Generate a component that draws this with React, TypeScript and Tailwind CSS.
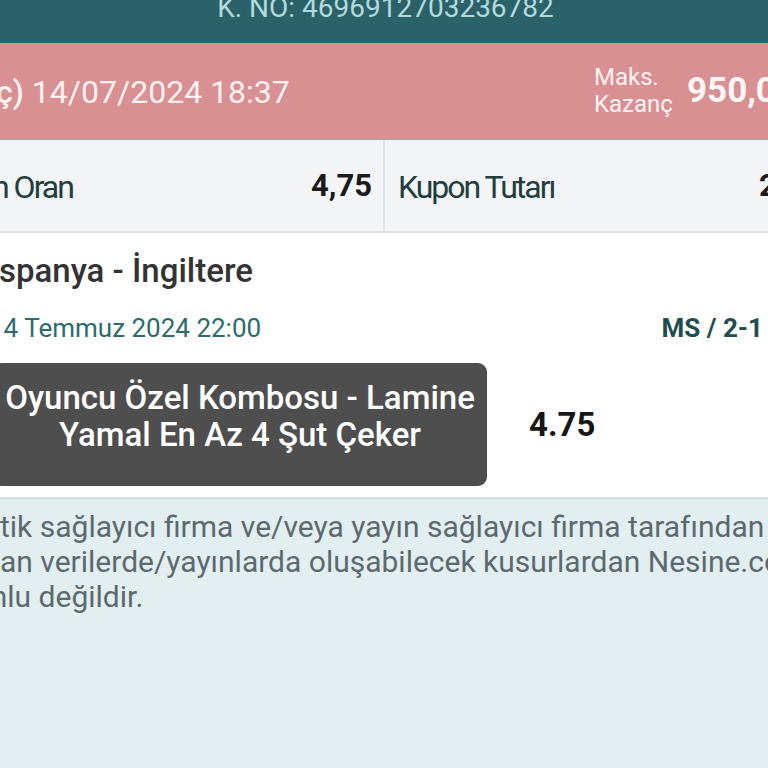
import React from "react";

export default function App() {
  return (
    <div className="w-[768px] h-[768px] overflow-hidden bg-[#e3eef1] font-['Roboto',sans-serif] flex flex-col">
      {/* top bar */}
      <div className="h-[43px] shrink-0 bg-[#2b6269] flex justify-center overflow-hidden pl-[3px]">
        <div className="-mt-[6px] text-[28px] leading-[28px] text-[#b3dadd] whitespace-nowrap">
          K. NO: 4696912703236782
        </div>
      </div>

      {/* pink band */}
      <div className="h-[97px] shrink-0 bg-[#d99092] flex items-start overflow-hidden">
        <div className="w-[594px] shrink-0">
          <div className="mt-[32px] -ml-[4px] text-[32px] leading-[34px] text-[#fdf1f1] whitespace-nowrap">
            <span className="font-medium">ç)</span> 14/07/2024 18:37
          </div>
        </div>
        <div className="w-[93px] shrink-0 mt-[21px] text-[24px] leading-[27px] text-[#fdf1f1] whitespace-nowrap">
          <div>Maks.</div>
          <div>Kazanç</div>
        </div>
        <div className="mt-[30px] text-[35px] leading-[35px] font-bold text-[#fdf6f6] whitespace-nowrap">
          950,00 TL
        </div>
      </div>

      {/* stats row */}
      <div className="h-[93px] shrink-0 bg-[#f3f4f5] border-b-2 border-[#dbe3e6] flex overflow-hidden">
        <div className="w-[385px] shrink-0 border-r-2 border-[#dfe4e7] flex items-center justify-between pr-[11px]">
          <div className="tracking-[-2px] -ml-[8px] text-[32px] leading-[32px] text-[#213d3e] whitespace-nowrap mt-[2px]">
            n Oran
          </div>
          <div className="text-[31px] leading-[31px] font-bold text-[#1b1b1b]">4,75</div>
        </div>
        <div className="flex items-center">
          <div className="w-[374px] shrink-0 pl-[13px] mt-[2px]">
            <div className="tracking-[-2px] text-[32px] leading-[32px] text-[#213d3e] whitespace-nowrap">
              Kupon Tutarı
            </div>
          </div>
          <div className="text-[31px] leading-[31px] font-bold text-[#1b1b1b] whitespace-nowrap">200,00 TL</div>
        </div>
      </div>

      {/* match section */}
      <div className="h-[266px] shrink-0 bg-white border-b-2 border-[#d3e0e3] flex flex-col overflow-hidden">
        <div className="mt-[21px] text-[33px] leading-[33px] font-medium text-[#333333] whitespace-nowrap -ml-[1px]">
          spanya - İngiltere
        </div>
        <div className="mt-[27px] h-[28px] flex items-start justify-between pr-[5px]">
          <div className="text-[26px] leading-[28px] text-[#2d6b6d] whitespace-nowrap -ml-[11px]">
            14 Temmuz 2024 22:00
          </div>
          <div className="text-[26px] leading-[28px] font-bold text-[#1f4e50] whitespace-nowrap">
            MS / 2-1
          </div>
        </div>
        <div className="mt-[21px] flex items-start">
          <div className="-ml-[7px] w-[494px] h-[123px] shrink-0 rounded-[9px] bg-[#4e4e4e] pt-[16px] text-center text-white font-medium text-[33px] leading-[37px]">
            <div className="whitespace-nowrap">Oyuncu Özel Kombosu - Lamine</div>
            <div className="whitespace-nowrap">Yamal En Az 4 Şut Çeker</div>
          </div>
          <div className="ml-[42px] mt-[45px] text-[33px] leading-[33px] font-bold text-[#161616]">4.75</div>
        </div>
      </div>

      {/* disclaimer */}
      <div className="mt-[10px] text-[30px] leading-[35px] text-[#5c6a70] whitespace-nowrap">
        <div>tik sağlayıcı firma ve/veya yayın sağlayıcı firma tarafından</div>
        <div>an verilerde/yayınlarda oluşabilecek kusurlardan Nesine.com</div>
        <div className="-ml-[19px]">mlu değildir.</div>
      </div>
    </div>
  );
}
